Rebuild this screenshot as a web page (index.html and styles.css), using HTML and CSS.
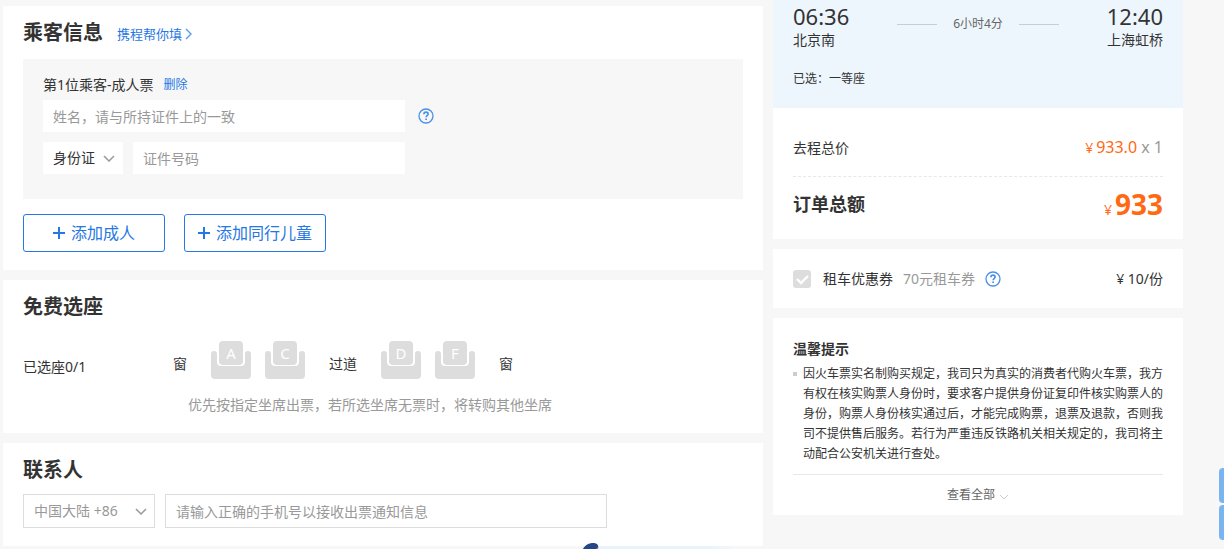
FILE: index.html
```html
<!DOCTYPE html>
<html lang="zh-CN">
<head>
<meta charset="utf-8">
<meta name="viewport" content="width=device-width, initial-scale=1">
<title>填写订单</title>
<link rel="stylesheet" href="styles.css">
</head>
<body>
<div class="page">
  <main class="main">
    <section class="card passengers">
      <div class="card-head">
        <h2 class="card-title">乘客信息</h2>
        <a class="fill-link" href="#">携程帮你填<svg class="fill-arrow" viewBox="0 0 7 12" aria-hidden="true"><path d="M1 1l5 5-5 5"/></svg></a>
      </div>
      <div class="passenger">
        <div class="passenger-head">
          <span>第1位乘客-成人票</span>
          <a class="remove-link" href="#">删除</a>
        </div>
        <div class="field-row">
          <input class="field name-field" type="text" aria-label="姓名" placeholder="姓名，请与所持证件上的一致">
          <button class="help" type="button" aria-label="姓名填写说明"><svg viewBox="0 0 16 16"><circle cx="8" cy="8" r="7"/><path class="mark" d="M5.9 6.3c0-1.3.9-2.1 2.1-2.1s2.1.8 2.1 1.9c0 1.5-2 1.6-2 3.2M8.1 10.4v1.6"/></svg></button>
        </div>
        <div class="field-row">
          <span class="picker">
            <select class="field id-type" aria-label="证件类型"><option>身份证</option></select>
            <svg class="chevron" viewBox="0 0 12 7" aria-hidden="true"><path d="M1 1l5 5 5-5"/></svg>
          </span>
          <input class="field id-field" type="text" aria-label="证件号码" placeholder="证件号码">
        </div>
      </div>
      <div class="add-row">
        <button class="add-button" type="button"><svg viewBox="0 0 12 12" aria-hidden="true"><path d="M6 0v12M0 6h12"/></svg>添加成人</button>
        <button class="add-button" type="button"><svg viewBox="0 0 12 12" aria-hidden="true"><path d="M6 0v12M0 6h12"/></svg>添加同行儿童</button>
      </div>
    </section>

    <section class="card seats">
      <div class="card-head"><h2 class="card-title">免费选座</h2></div>
      <div class="seat-row">
        <span class="seat-count">已选座0/1</span>
        <span class="seat-label">窗</span>
        <button class="seat" type="button"><svg viewBox="0 0 40 38" aria-hidden="true"><rect x="8" width="24" height="24" rx="4"/><path d="M0 13a3 3 0 0 1 6 0v8a4 4 0 0 0 4 4h20a4 4 0 0 0 4-4v-8a3 3 0 0 1 6 0v21a4 4 0 0 1-4 4H4a4 4 0 0 1-4-4z"/></svg><span>A</span></button>
        <button class="seat" type="button"><svg viewBox="0 0 40 38" aria-hidden="true"><rect x="8" width="24" height="24" rx="4"/><path d="M0 13a3 3 0 0 1 6 0v8a4 4 0 0 0 4 4h20a4 4 0 0 0 4-4v-8a3 3 0 0 1 6 0v21a4 4 0 0 1-4 4H4a4 4 0 0 1-4-4z"/></svg><span>C</span></button>
        <span class="seat-label aisle">过道</span>
        <button class="seat" type="button"><svg viewBox="0 0 40 38" aria-hidden="true"><rect x="8" width="24" height="24" rx="4"/><path d="M0 13a3 3 0 0 1 6 0v8a4 4 0 0 0 4 4h20a4 4 0 0 0 4-4v-8a3 3 0 0 1 6 0v21a4 4 0 0 1-4 4H4a4 4 0 0 1-4-4z"/></svg><span>D</span></button>
        <button class="seat" type="button"><svg viewBox="0 0 40 38" aria-hidden="true"><rect x="8" width="24" height="24" rx="4"/><path d="M0 13a3 3 0 0 1 6 0v8a4 4 0 0 0 4 4h20a4 4 0 0 0 4-4v-8a3 3 0 0 1 6 0v21a4 4 0 0 1-4 4H4a4 4 0 0 1-4-4z"/></svg><span>F</span></button>
        <span class="seat-label window-end">窗</span>
      </div>
      <p class="seat-note">优先按指定坐席出票，若所选坐席无票时，将转购其他坐席</p>
    </section>

    <section class="card contact">
      <div class="card-head"><h2 class="card-title">联系人</h2></div>
      <div class="contact-row">
        <span class="picker">
          <select class="field outlined region" aria-label="国家或地区代码"><option>中国大陆 +86</option></select>
          <svg class="chevron" viewBox="0 0 12 7" aria-hidden="true"><path d="M1 1l5 5 5-5"/></svg>
        </span>
        <input class="field outlined phone" type="tel" aria-label="手机号" placeholder="请输入正确的手机号以接收出票通知信息">
      </div>
    </section>
  </main>

  <aside class="side">
    <section class="summary">
      <div class="trip">
        <div class="trip-line">
          <div class="stop"><span class="time">06:36</span><span>北京南</span></div>
          <div class="duration">6小时4分</div>
          <div class="stop arrive"><span class="time">12:40</span><span>上海虹桥</span></div>
        </div>
        <p class="chosen">已选：一等座</p>
      </div>
      <div class="prices">
        <div class="price-row">
          <span>去程总价</span>
          <span class="fare"><span class="amount"><small class="yen">¥</small>933.0</span> x 1</span>
        </div>
        <div class="total-row">
          <strong class="total-label">订单总额</strong>
          <span class="total"><small class="yen">¥</small><b>933</b></span>
        </div>
      </div>
    </section>

    <section class="side-card coupon">
      <label class="coupon-label">
        <span class="tick"><input type="checkbox"><svg viewBox="0 0 18 18" aria-hidden="true"><path d="M4 9l4 4 7-7"/></svg></span>
        <span>租车优惠券</span>
      </label>
      <span class="coupon-info">70元租车券</span>
      <button class="help" type="button" aria-label="租车券说明"><svg viewBox="0 0 16 16"><circle cx="8" cy="8" r="7"/><path class="mark" d="M5.9 6.3c0-1.3.9-2.1 2.1-2.1s2.1.8 2.1 1.9c0 1.5-2 1.6-2 3.2M8.1 10.4v1.6"/></svg></button>
      <span class="coupon-price">¥ 10/份</span>
    </section>

    <section class="side-card tips">
      <h3 class="tips-title">温馨提示</h3>
      <ul class="tips-list">
        <li>因火车票实名制购买规定，我司只为真实的消费者代购火车票，我方有权在核实购票人身份时，要求客户提供身份证复印件核实购票人的身份，购票人身份核实通过后，才能完成购票，退票及退款，否则我司不提供售后服务。若行为严重违反铁路机关相关规定的，我司将主动配合公安机关进行查处。</li>
      </ul>
      <button class="view-all" type="button">查看全部<svg viewBox="0 0 10 6" aria-hidden="true"><path d="M1 1l4 4 4-4"/></svg></button>
    </section>
  </aside>
</div>

<div class="toast-edge"><svg viewBox="0 0 16 7" aria-hidden="true"><path d="M0 7C2 3 6 1 10 1c4 0 6 2 5 6z" fill="#254785"/><path d="M13 7l2-2v2z" fill="#d96b78"/></svg></div>
<div class="side-tabs"><span></span><span></span></div>
</body>
</html>
```

FILE: styles.css
```css
* { box-sizing: border-box; }

body {
  margin: 0;
  min-height: 100vh;
  background: #f7f7f7;
  color: #333;
  font: 14px/20px "Noto Sans", "Noto Sans CJK SC", sans-serif;
}

h2, h3, p, ul { margin: 0; padding: 0; }
a { color: #2577e3; text-decoration: none; }
button, input, select { margin: 0; font: inherit; color: inherit; }
button { padding: 0; border: 0; background: none; cursor: pointer; }
svg { display: block; fill: none; }

.page {
  display: flex;
  align-items: flex-start;
  gap: 10px;
  padding: 0 41px 0 3px;
}

.main {
  display: flex;
  flex: 1;
  flex-direction: column;
  gap: 10px;
  min-width: 0;
  padding-top: 6px;
}

.card { padding: 13px 20px 18px; background: #fff; }
.card-head { display: flex; align-items: center; gap: 14px; padding-bottom: 12px; }
.card-title { font-size: 20px; line-height: 28px; font-weight: 700; }
.fill-link { display: flex; align-items: center; gap: 3px; padding-top: 2px; font-size: 13px; }
.fill-arrow { width: 7px; height: 12px; stroke: #5b9aeb; stroke-width: 1.4; }

.passenger { padding: 16px 20px 25px; background: #f7f7f7; }
.passenger-head { display: flex; align-items: center; gap: 10px; padding-bottom: 5px; }
.remove-link { font-size: 12px; }
.field-row { display: flex; align-items: center; gap: 10px; }
.field-row + .field-row { margin-top: 10px; }
.field {
  height: 32px;
  padding: 0 10px;
  border: 0;
  border-radius: 0;
  background: #fff;
  appearance: none;
}
.field::placeholder { color: #999; opacity: 1; }
.name-field { width: 362px; }
.id-field { width: 272px; }
.id-type { width: 80px; }
.picker { display: grid; align-items: center; }
.picker > * { grid-area: 1 / 1; }
.chevron {
  justify-self: end;
  width: 12px;
  height: 7px;
  margin-right: 8px;
  stroke: #999;
  stroke-width: 1.5;
  pointer-events: none;
}
.help svg { width: 16px; height: 16px; stroke: #4a8fe8; stroke-width: 1.3; }
.help .mark { stroke-width: 1.7; }
.name-field + .help { margin-left: 3px; }

.add-row { display: flex; gap: 19px; padding-top: 15px; }
.add-button {
  display: flex;
  align-items: center;
  justify-content: center;
  gap: 6px;
  width: 142px;
  height: 38px;
  border: 1px solid #2577e3;
  border-radius: 3px;
  color: #2577e3;
  font-size: 16px;
}
.add-button svg { width: 12px; height: 12px; stroke: #2577e3; stroke-width: 2; }

.seat-row { display: flex; align-items: center; gap: 14px; padding-top: 8px; }
.seat-count { width: 136px; padding-top: 14px; }
.seat-label { padding-top: 8px; margin-right: 10px; }
.aisle { margin-left: 10px; }
.window-end { margin-left: 10px; }
.seat {
  display: grid;
  width: 40px;
  height: 38px;
  color: #fff;
  font-size: 15px;
  line-height: 25px;
}
.seat > * { grid-area: 1 / 1; }
.seat svg { width: 40px; height: 38px; fill: #ddd; }
.seat-note { padding: 16px 0 0 165px; color: #999; }

.contact .card-head { padding-bottom: 10px; }
.contact-row { display: flex; gap: 10px; }
.outlined { height: 34px; border: 1px solid #ddd; }
.region { width: 132px; color: #999; }
.phone { width: 442px; }

.side { display: flex; flex: 0 0 410px; flex-direction: column; gap: 10px; }
.summary { background: #fff; }
.trip { padding: 2px 20px 19px; background: #eef6fd; }
.trip-line { display: flex; justify-content: space-between; }
.stop { display: flex; flex-direction: column; }
.arrive { text-align: right; }
.time { font-size: 22px; line-height: 28px; }
.duration {
  display: flex;
  align-items: center;
  gap: 16px;
  height: 44px;
  color: #666;
  font-size: 12px;
}
.duration::before, .duration::after { width: 40px; height: 1px; background: #ccc; content: ""; }
.chosen { padding-top: 19px; font-size: 12px; }

.prices { padding: 28px 20px 16px; }
.price-row, .total-row { display: flex; align-items: center; justify-content: space-between; }
.price-row { height: 41px; padding-bottom: 17px; border-bottom: 1px dashed #e8e8e8; }
.fare { color: #999; font-size: 16px; }
.amount, .total { color: #ff6913; }
.yen { margin-right: 3px; font-size: 14px; }
.total-row { height: 46px; padding-top: 8px; }
.total-label { font-size: 18px; }
.total b { font-size: 28px; line-height: 36px; }

.side-card { background: #fff; }
.coupon { display: flex; align-items: center; gap: 10px; padding: 20px; height: 59px; }
.coupon-label { display: flex; align-items: center; gap: 12px; }
.tick { display: grid; width: 18px; height: 18px; }
.tick > * { grid-area: 1 / 1; }
.tick input { width: 18px; height: 18px; margin: 0; border-radius: 3px; background: #ddd; appearance: none; }
.tick svg { stroke: #fff; stroke-width: 2.4; pointer-events: none; }
.coupon-info { color: #999; }
.coupon-price { margin-left: auto; }

.tips { padding: 21px 20px 0; }
.tips-title { font-size: 14px; line-height: 20px; }
.tips-list { padding: 5px 0 10px; list-style: none; font-size: 12px; }
.tips-list li {
  padding-left: 10px;
  background: linear-gradient(#ccc, #ccc) 0 8px / 4px 4px no-repeat;
}
.view-all {
  display: flex;
  align-items: center;
  justify-content: center;
  gap: 4px;
  width: 100%;
  height: 41px;
  border-top: 1px solid #e8e8e8;
  color: #666;
  font-size: 12px;
}
.view-all svg { width: 10px; height: 6px; margin-top: 3px; stroke: #ccc; }

.toast-edge {
  position: fixed;
  bottom: 0;
  left: 583px;
  width: 155px;
  height: 7px;
  background: linear-gradient(90deg, #e8f3fd 80%, #f7f7f7) 0 4px no-repeat;
}
.toast-edge svg { width: 16px; height: 7px; }

.side-tabs {
  position: fixed;
  right: 0;
  bottom: 9px;
  display: grid;
  gap: 2px;
}
.side-tabs span { width: 5px; height: 35px; border-radius: 4px 0 0 4px; background: #7ab5f0; }
```
